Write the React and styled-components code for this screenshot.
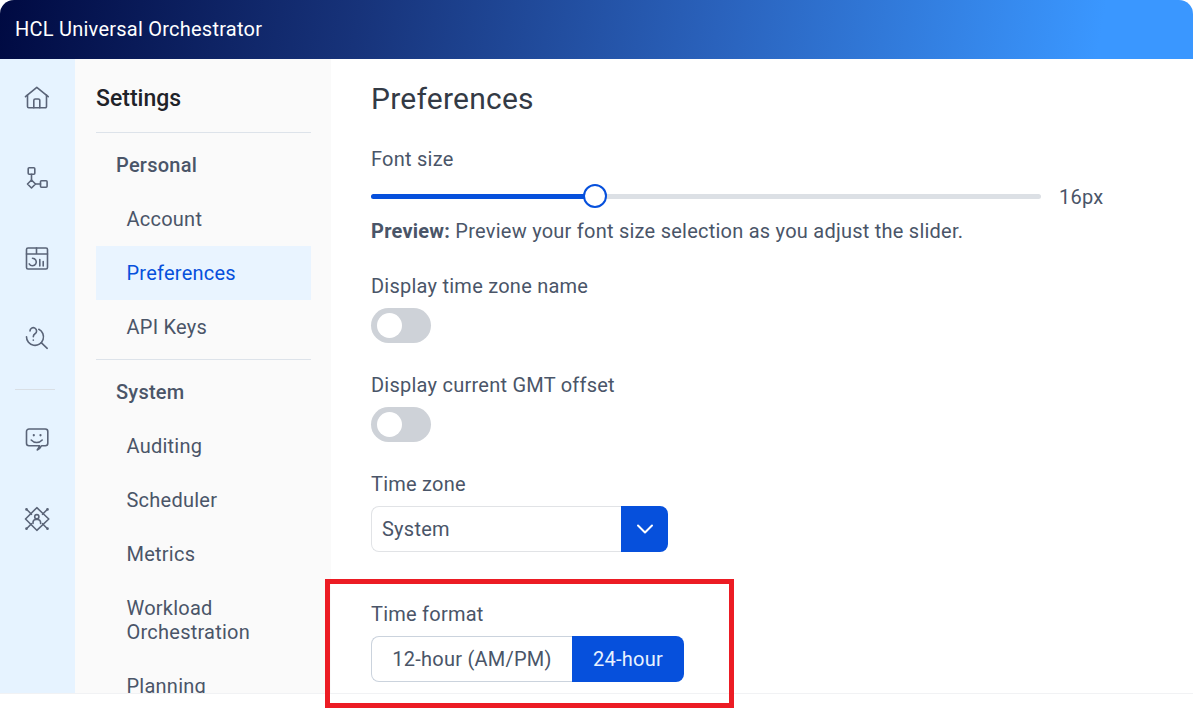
import React from 'react';
import styled, { createGlobalStyle } from 'styled-components';

const GlobalStyle = createGlobalStyle`
  html, body {
    margin: 0;
    padding: 0;
    background: #FFFFFF;
  }
  * {
    box-sizing: border-box;
  }
  body {
    font-family: Roboto, "Liberation Sans", sans-serif;
    color: #4A5568;
    letter-spacing: 0.24px;
  }
`;

const Page = styled.div`
  position: relative;
  width: 1193px;
  height: 708px;
  overflow: hidden;
  display: flex;
  flex-direction: column;
`;

const Header = styled.header`
  height: 59px;
  flex-shrink: 0;
  display: flex;
  align-items: center;
  padding: 0 0 2px 15px;
  color: #FFFFFF;
  font-size: 20px;
  border-radius: 14px 14px 0 0;
  background: linear-gradient(100deg, #000A42 0%, #17337A 30%, #2A62BC 60%, #3A97FF 92%);
`;

const Main = styled.div`
  height: 634px;
  flex-shrink: 0;
  display: flex;
  overflow: hidden;
`;

const Footer = styled.div`
  flex: 1;
  border-top: 1px solid #F1F2F4;
`;

const Rail = styled.nav`
  width: 75px;
  flex-shrink: 0;
  background: #E6F3FF;
  display: flex;
  flex-direction: column;
  align-items: center;
  padding: 19px 2px 0 0;
`;

const RailButton = styled.div`
  width: 40px;
  height: 40px;
  margin-bottom: 40px;
  display: flex;
  align-items: center;
  justify-content: center;
  color: #5A6478;
`;

const RailDivider = styled.div`
  width: 40px;
  height: 1px;
  background: #D9DFE5;
  margin: -9px 3px 29px 0;
`;

const SideNav = styled.aside`
  width: 256px;
  flex-shrink: 0;
  background: #FAFAFA;
  padding: 0 20px 0 21px;
  overflow: hidden;
`;

const SideTitle = styled.h2`
  margin: 0;
  height: 74px;
  padding-top: 26px;
  font-size: 23px;
  line-height: 28px;
  font-weight: 500;
  letter-spacing: 0;
  color: #1F2329;
  border-bottom: 1px solid #DDE3EA;
`;

const GroupLabel = styled.div`
  height: 59px;
  padding: 20px 0 0 20px;
  font-size: 20px;
  line-height: 24px;
  font-weight: 500;
  color: #4A5568;
`;

const NavItem = styled.div`
  min-height: 54px;
  padding: 15px 10px 15px 30.5px;
  font-size: 20px;
  line-height: 24px;
  color: ${props => props.active ? '#0650DC' : '#4A5568'};
  background: ${props => props.active ? '#E9F4FF' : 'transparent'};
`;

const NavDivider = styled.div`
  height: 1px;
  background: #DDE3EA;
  margin-top: 5px;
`;

const Content = styled.main`
  flex: 1;
  padding-left: 40px;
  overflow: hidden;
`;

const PageTitle = styled.h1`
  margin: 0;
  height: 88px;
  padding-top: 22px;
  font-size: 30px;
  line-height: 36px;
  font-weight: 400;
  color: #333A45;
`;

const FieldLabel = styled.div`
  font-size: 20px;
  line-height: 24px;
  color: #4A5568;
`;

const SliderRow = styled.div`
  display: flex;
  align-items: center;
  height: 30px;
  margin-top: 10px;
`;

const SliderTrack = styled.div`
  width: 670px;
  height: 5px;
  border-radius: 3px;
  background: #DCE0E5;
  display: flex;
  align-items: center;
`;

const SliderFill = styled.div`
  height: 5px;
  border-radius: 3px 0 0 3px;
  background: #0650DC;
`;

const SliderThumb = styled.div`
  width: 24px;
  height: 24px;
  flex-shrink: 0;
  margin-left: -12px;
  border-radius: 50%;
  background: #FFFFFF;
  border: 2px solid #0650DC;
`;

const SliderValue = styled.span`
  margin: 2px 0 0 18px;
  font-size: 20px;
`;

const PreviewText = styled.p`
  margin: 8px 0 0;
  font-size: 20px;
  line-height: 24px;
  color: #4A5568;

  b {
    font-weight: 700;
  }
`;

const Field = styled.div`
  margin-top: ${props => props.gap || '30px'};
`;

const Toggle = styled.div`
  width: 60px;
  height: 35px;
  margin-top: 10px;
  padding: 5px 6px;
  border-radius: 18px;
  background: #CED2D8;

  &::after {
    content: '';
    display: block;
    width: 25px;
    height: 25px;
    border-radius: 50%;
    background: #FFFFFF;
  }
`;

const SelectBox = styled.div`
  width: 297px;
  height: 46px;
  margin-top: 10px;
  display: flex;
`;

const SelectValue = styled.div`
  flex: 1;
  display: flex;
  align-items: center;
  padding-left: 10px;
  font-size: 20px;
  border: 1px solid #E1E3E6;
  border-right: none;
  border-radius: 8px 0 0 8px;
`;

const SelectArrow = styled.div`
  width: 47px;
  display: flex;
  align-items: center;
  justify-content: center;
  color: #FFFFFF;
  background: #0650DC;
  border-radius: 0 8px 8px 0;
`;

const Segmented = styled.div`
  display: flex;
  height: 46px;
  margin-top: 10px;
`;

const Segment = styled.div`
  display: flex;
  align-items: center;
  justify-content: center;
  width: ${props => props.selected ? '112px' : '201px'};
  font-size: 20px;
  color: ${props => props.selected ? '#E8F2FF' : '#4A5568'};
  background: ${props => props.selected ? '#0650DC' : '#FFFFFF'};
  border: ${props => props.selected ? 'none' : '1px solid #CBD3DD'};
  border-right: none;
  border-radius: ${props => props.selected ? '0 8px 8px 0' : '8px 0 0 8px'};
`;

const Annotation = styled.div`
  position: absolute;
  left: 325px;
  top: 579px;
  width: 409px;
  height: 129px;
  border: 5px solid #EC1C24;
  pointer-events: none;
`;

const Icon = ({ children }) => (
  <svg width="26" height="26" viewBox="0 0 26 26" fill="none" stroke="currentColor" strokeWidth="1.6" strokeLinecap="round" strokeLinejoin="round">
    {children}
  </svg>
);

const railIcons = [
  <Icon key="home">
    <path d="M1.500 11.700 12.800 2.300l11.400 9.400" />
    <path d="M3.500 10v11.500a1.200 1.200 0 0 0 1.200 1.200h16.600a1.200 1.200 0 0 0 1.200-1.200V10" />
    <path d="M9.800 22.700V15.500a1.500 1.500 0 0 1 1.500-1.500h3a1.500 1.500 0 0 1 1.500 1.500v7.200" />
  </Icon>,
  <Icon key="flow">
    <rect x="4.200" y="2.700" width="6.600" height="6.600" rx="1" />
    <path d="M7.500 9.300V15" />
    <path d="M7.500 15l4 4-4 4-4-4z" />
    <path d="M11.500 19h5" />
    <rect x="16.500" y="15.700" width="6.600" height="6.600" rx="1" />
  </Icon>,
  <Icon key="dash">
    <rect x="2.500" y="3" width="21" height="21" rx="1.500" />
    <path d="M2.500 9h21M12.500 3v6" />
    <path d="M8.500 13.200a3.800 3.800 0 1 1-3.300 5.700" />
    <path d="M15.800 14.500V21M19.200 16.500V21" />
  </Icon>,
  <Icon key="search">
    <path d="M14.800 4.300A8.500 8.500 0 1 1 2.500 11.700" />
    <path d="M6 6a3.300 3.300 0 1 1 5 2.800c-1.200.7-1.700 1.400-1.700 2.900" />
    <path d="M9.300 15v.2" />
    <path d="M17.200 17.700 23.200 23.300" />
  </Icon>,
  <Icon key="chat">
    <path d="M15.500 19.700H5a2.500 2.500 0 0 1-2.500-2.500V5.500A2.500 2.500 0 0 1 5 3h16.300a2.500 2.500 0 0 1 2.500 2.500v11.700a2.500 2.500 0 0 1-2.500 2.500H17.500c-.8 1.800-2.300 3.300-4.300 4.300 1-1.300 1.800-2.600 2.300-4.300" />
    <path d="M9.800 9v.3M16.500 9v.3" strokeWidth="2.200" />
    <path d="M7.200 14c3 3.300 8 3.300 11 0" />
  </Icon>,
  <Icon key="admin">
    <path d="M12.800 1.700 24.800 13 12.800 24.300 1.500 13z" />
    <circle cx="12.800" cy="10.700" r="2.100" />
    <path d="M9 17.500v-1a3 3 0 0 1 3-3h1.600a3 3 0 0 1 3 3v1" />
    <path d="M2.500 3.300 7.500 8.300M23.500 3.300 18.500 8.300M2.500 22.700 7.500 17.700M23.500 22.700 18.500 17.700" />
    <path d="M2.500 3.300v.1M23.500 3.300v.1M2.500 22.600v.1M23.500 22.600v.1" strokeWidth="2.600" />
  </Icon>,
];

const personalItems = ['Account', 'Preferences', 'API Keys'];
const systemItems = ['Auditing', 'Scheduler', 'Metrics', 'Workload Orchestration', 'Planning'];

const App = () => (
  <Page>
    <GlobalStyle />
    <Header>HCL Universal Orchestrator</Header>
    <Main>
      <Rail>
        {railIcons.slice(0, 4).map(icon => <RailButton key={icon.key}>{icon}</RailButton>)}
        <RailDivider />
        {railIcons.slice(4).map(icon => <RailButton key={icon.key}>{icon}</RailButton>)}
      </Rail>
      <SideNav>
        <SideTitle>Settings</SideTitle>
        <GroupLabel>Personal</GroupLabel>
        {personalItems.map(item => (
          <NavItem key={item} active={item === 'Preferences'}>{item}</NavItem>
        ))}
        <NavDivider />
        <GroupLabel>System</GroupLabel>
        {systemItems.map(item => <NavItem key={item}>{item}</NavItem>)}
      </SideNav>
      <Content>
        <PageTitle>Preferences</PageTitle>
        <FieldLabel>Font size</FieldLabel>
        <SliderRow>
          <SliderTrack>
            <SliderFill style={{ width: `${(224 / 670) * 100}%` }} />
            <SliderThumb />
          </SliderTrack>
          <SliderValue>16px</SliderValue>
        </SliderRow>
        <PreviewText>
          <b>Preview:</b> Preview your font size selection as you adjust the slider.
        </PreviewText>
        <Field gap="31px">
          <FieldLabel>Display time zone name</FieldLabel>
          <Toggle />
        </Field>
        <Field>
          <FieldLabel>Display current GMT offset</FieldLabel>
          <Toggle />
        </Field>
        <Field>
          <FieldLabel>Time zone</FieldLabel>
          <SelectBox>
            <SelectValue>System</SelectValue>
            <SelectArrow>
              <svg width="18" height="10" viewBox="0 0 18 10" fill="none" stroke="currentColor" strokeWidth="2" strokeLinecap="round" strokeLinejoin="round">
                <path d="M2 1.500 9 8.500l7-7" />
              </svg>
            </SelectArrow>
          </SelectBox>
        </Field>
        <Field gap="50px">
          <FieldLabel>Time format</FieldLabel>
          <Segmented>
            <Segment>12-hour (AM/PM)</Segment>
            <Segment selected>24-hour</Segment>
          </Segmented>
        </Field>
      </Content>
    </Main>
    <Footer />
    <Annotation />
  </Page>
);

export default App;
